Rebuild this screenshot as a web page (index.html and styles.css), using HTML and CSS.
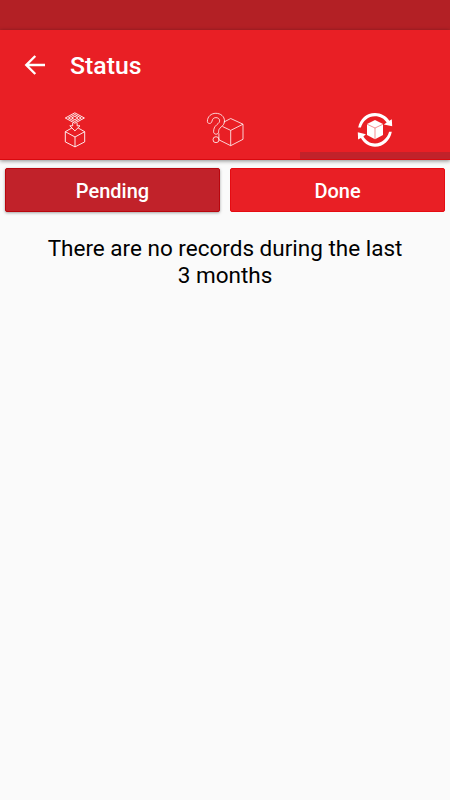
FILE: index.html
```html
<!DOCTYPE html>
<html lang="en">
<head>
<meta charset="utf-8">
<meta name="viewport" content="width=device-width, initial-scale=1">
<title>Status</title>
<link rel="stylesheet" href="styles.css">
</head>
<body>
<div class="status-bar"></div>
<header class="app-bar">
  <div class="toolbar">
    <svg class="back" viewBox="0 0 30 30" aria-hidden="true"><path d="M25 15H6.5M15.3 6L6.3 15l9 9"/></svg>
    <h1>Status</h1>
  </div>
  <nav class="tabs">
    <div class="tab">
      <svg class="line-icon drop-icon" viewBox="0 0 50 50" aria-hidden="true">
        <path d="M15.3 13L24.8 7.8L34.4 13L24.8 18.2Z M18.4 13l6.4-3.5 6.4 3.5-6.4 3.5Z M21.6 13l3.2-1.7 3.2 1.7-3.2 1.7Z"/>
        <path d="M22.7 18v2.8h-2.9l5.1 5.1 5.1-5.1h-2.9v-2.8"/>
        <path d="M21.8 23L15.3 26.7V36.9L25 41.9L34.7 36.9V26.7L28.2 23M15.3 26.7L25 32L34.7 26.7M25 32V41.9"/>
      </svg>
    </div>
    <div class="tab">
      <svg class="line-icon" viewBox="0 0 50 50" aria-hidden="true">
        <path d="M23.8 17.1L30.7 13.5L43 19.2V34.3L30.7 40.7L18.9 34.8V28.4M22.5 21.5L30.7 25.4L43 19.2M30.7 25.4V40.7"/>
        <path d="M7.4 16.4C7.4 11.5 11.2 8.3 15.8 8.3C20.8 8.3 24.5 11.6 24.5 15.9C24.5 18.8 23.2 20.3 21.1 22C19.2 23.7 18.6 24.7 18.6 26.8C18.6 30 13.6 30 13.6 26.8C13.6 23.8 14.4 21.8 16.7 19.8C18.8 18.1 19.6 17.2 19.6 15.8C19.6 13.8 18 12.6 15.9 12.6C13.8 12.6 12.3 14 12 16.2C11.5 19.2 7.4 19.2 7.4 16.4Z"/>
        <circle cx="16" cy="34.7" r="3"/>
      </svg>
    </div>
    <div class="tab active">
      <svg class="sync-icon" viewBox="0 0 50 50" aria-hidden="true">
        <path class="solid" d="M8.2 22.6C9.8 14.2 16.5 8.1 25 8.1C31.1 8.1 36.5 11.2 39.3 15.8L41.8 14.3L42.2 21.2L33.9 19.6L36.7 17.6C34.3 13.7 30 11.3 25 11.3C18.2 11.3 12.8 15.9 10.9 22.6Z"/>
        <path class="solid" d="M41.8 26.8C40.2 35.5 33.5 41.8 25 41.8C18.9 41.8 13.7 38.1 10.9 33.1L8.1 34.6L7.8 27.2L15.9 29.2L13.4 31.4C15.9 35.6 20 38.4 25 38.4C31.8 38.4 37.2 33.5 39.1 26.8Z"/>
        <path class="solid" d="M25 15.1L33 18.9V29.9L25 34.2L17 29.9V18.9Z"/>
        <path class="seam" d="M17 19.2L25 23L33 19.2M25 23V34"/>
      </svg>
    </div>
  </nav>
</header>
<main>
  <div class="filters">
    <button class="filter selected">Pending</button>
    <button class="filter">Done</button>
  </div>
  <p class="empty">There are no records during the last<br>3 months</p>
</main>
</body>
</html>
```
FILE: styles.css
```css
* {
  box-sizing: border-box;
}

body {
  margin: 0;
  min-height: 800px;
  background: #fafafa;
  color: #000;
  font-family: Roboto, sans-serif;
}

.status-bar {
  height: 30px;
  background: #b32025;
}

.app-bar {
  height: 130px;
  background: #e91f25;
  border-bottom: 1px solid #d9090f;
  box-shadow: 0 1px 4px rgba(0, 0, 0, 0.45);
}

.toolbar {
  display: flex;
  align-items: center;
  height: 70px;
  padding-left: 20px;
}

.back {
  width: 30px;
  height: 30px;
  fill: none;
  stroke: #fff;
  stroke-width: 2.4;
}

h1 {
  margin: 2px 0 0 20px;
  color: #fff;
  font-size: 24.8px;
  font-weight: 500;
  line-height: 30px;
}

.tabs {
  display: flex;
  height: 59px;
}

.tab {
  display: flex;
  flex: 1;
  justify-content: center;
  padding-top: 5px;
}

.tab.active {
  background: linear-gradient(#c1222a, #c1222a) bottom / 100% 7px no-repeat;
}

.tab svg {
  width: 50px;
  height: 50px;
}

.line-icon {
  fill: none;
  stroke: #fff;
  stroke-width: 0.8;
  stroke-linejoin: round;
}

.drop-icon {
  stroke-width: 0.9;
}

.solid {
  fill: #fff;
}

.seam {
  fill: none;
  stroke: #e91f25;
  stroke-width: 0.5;
}

.filters {
  display: flex;
  gap: 10px;
  padding: 8px 5px 0;
}

.filter {
  flex: 1;
  height: 44px;
  padding: 1px 0 0;
  border: 1px solid #e60b12;
  border-radius: 2px;
  background: #e91f25;
  color: #fff;
  font: 500 20px/24px Roboto, sans-serif;
}

.filter.selected {
  border-color: #b9060d;
  background: #c1222a;
  box-shadow: 0 1px 3px rgba(0, 0, 0, 0.35);
}

.empty {
  margin: 23px 0 0;
  font-size: 22.5px;
  line-height: 26.5px;
  text-align: center;
}
```
